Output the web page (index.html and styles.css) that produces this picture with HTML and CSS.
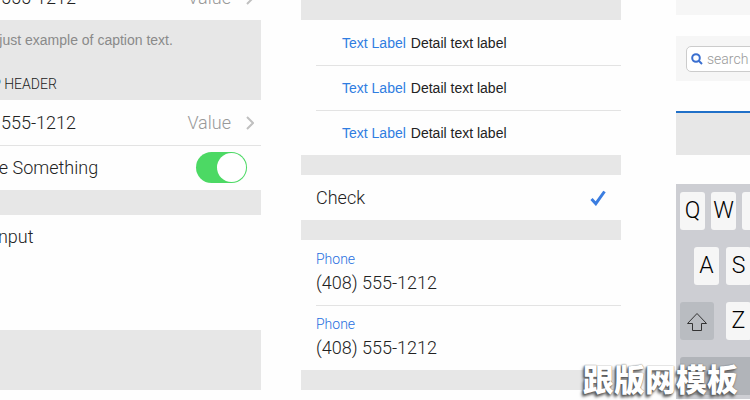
FILE: index.html
```html
<!DOCTYPE html>
<html lang="en">
<head>
  <meta charset="UTF-8">
  <meta name="viewport" content="width=device-width, initial-scale=1.0">
  <title>UI Kit</title>
  <link rel="stylesheet" href="styles.css">
</head>
<body>
  <main class="board">
    <!-- Settings list, runs off the left edge -->
    <section class="column column-left">
      <div class="panel">
        <a class="row" href="#">
          <span>(408) 555-1212</span>
          <span class="value">Value</span>
          <svg class="chevron" viewBox="0 0 8 14"><path d="M1 1l6 6-6 6"/></svg>
        </a>
        <div class="group">
          <p class="caption">This is just example of caption text.</p>
          <h2 class="group-header">GROUP HEADER</h2>
        </div>
        <a class="row" href="#">
          <span>(408) 555-1212</span>
          <span class="value">Value</span>
          <svg class="chevron" viewBox="0 0 8 14"><path d="M1 1l6 6-6 6"/></svg>
        </a>
        <label class="row line">
          <span>Enable Something</span>
          <input class="switch" type="checkbox" checked>
        </label>
        <div class="spacer spacer-mid"></div>
        <label class="row row-area">
          <span>Text Input</span>
          <textarea class="area"></textarea>
        </label>
        <div class="spacer spacer-big"></div>
      </div>
    </section>

    <!-- Detail, check and contact cells -->
    <section class="column">
      <div class="spacer"></div>
      <div class="row detail"><span class="blue">Text Label</span><span>Detail text label</span></div>
      <div class="row detail line"><span class="blue">Text Label</span><span>Detail text label</span></div>
      <div class="row detail line"><span class="blue">Text Label</span><span>Detail text label</span></div>
      <div class="spacer"></div>
      <label class="row">
        <span>Check</span>
        <span class="check">
          <input type="checkbox" checked>
          <svg viewBox="0 0 16 16"><path d="M1.500 9l4.300 4.700L14.500 1.500"/></svg>
        </span>
      </label>
      <div class="spacer"></div>
      <div class="row contact">
        <span class="contact-label">Phone</span>
        <span>(408) 555-1212</span>
      </div>
      <div class="row contact line">
        <span class="contact-label">Phone</span>
        <span>(408) 555-1212</span>
      </div>
      <div class="spacer"></div>
    </section>

    <!-- Bars and keyboard, runs off the right edge -->
    <section class="column column-right">
      <div class="bar"></div>
      <form class="search-bar">
        <label class="search">
          <svg viewBox="0 0 12 12"><circle cx="5" cy="5" r="3.800"/><path d="M8 8l3 3"/></svg>
          <input type="search" placeholder="search" aria-label="search">
        </label>
      </form>
      <div class="progress"></div>
      <div class="keyboard">
        <div class="keys">
          <button class="key">Q</button>
          <button class="key">W</button>
          <button class="key" aria-label="next key"></button>
        </div>
        <div class="keys keys-middle">
          <button class="key">A</button>
          <button class="key">S</button>
        </div>
        <div class="keys keys-bottom">
          <button class="key shift" aria-label="shift">
            <svg viewBox="0 0 22 20"><path d="M11 1.500L1.500 11.500H6.500V18.500H15.500V11.500H20.500Z"/></svg>
          </button>
          <button class="key">Z</button>
        </div>
        <div class="keys">
          <button class="key wide" aria-label="numbers"></button>
        </div>
      </div>
    </section>
  </main>
  <div class="watermark" lang="zh">跟版网模板</div>
</body>
</html>
```
FILE: styles.css
```css
* {
  box-sizing: border-box;
}
body {
  margin: 0;
  background-color: #fefefe;
  color: #222;
  font-family: Roboto, "Liberation Sans", sans-serif;
  font-size: 18px;
  font-weight: 300;
  line-height: 22px;
  overflow: hidden;
}
.board {
  display: grid;
  grid-template-columns: 301fr 375fr 74fr;
}
.column {
  min-width: 0;
  padding-right: 55px;
}
.column-left {
  overflow: hidden;
  padding-right: 40px;
}
.column-right {
  overflow: hidden;
  padding-right: 0;
}
/* the left panel is scrolled up and out to the left */
.panel {
  margin: -25px 0 0 -60px;
}
.row {
  position: relative;
  display: flex;
  align-items: center;
  height: 45px;
  padding: 0 15px;
  color: inherit;
  text-decoration: none;
  white-space: nowrap;
}
.line::before {
  content: "";
  position: absolute;
  top: 0;
  left: 15px;
  right: 0;
  height: 1px;
  background-color: #e3e3e3;
}
.value {
  margin-left: auto;
  color: #999;
}
.chevron {
  width: 8px;
  height: 14px;
  margin: 0 -8px 0 15px;
  fill: none;
  stroke: #c0c0c0;
  stroke-width: 2;
}
.group {
  height: 80px;
  padding: 9px 15px;
  background-color: #e7e7e7;
}
.caption {
  margin: 0;
  color: #8a8a8a;
  font-family: "Liberation Sans", Arial, sans-serif;
  font-size: 14px;
  font-weight: normal;
}
.group-header {
  margin: 22px 0 0;
  font-size: 14px;
  font-weight: 300;
}
.spacer {
  height: 20px;
  background-color: #e7e7e7;
}
.spacer-mid {
  height: 25px;
}
.spacer-big {
  height: 60px;
}
.switch {
  appearance: none;
  display: flex;
  justify-content: flex-end;
  width: 51px;
  height: 31px;
  margin: 0 -1px 0 auto;
  padding: 1px;
  border-radius: 16px;
  background-color: #4cd964;
}
.switch::after {
  content: "";
  width: 29px;
  height: 29px;
  border-radius: 50%;
  background-color: #fff;
}
.row-area {
  align-items: flex-start;
  height: 115px;
  padding-top: 11px;
}
.area {
  flex: 1;
  min-width: 0;
  height: 90px;
  margin-left: 15px;
  border: 0;
  background: none;
  resize: none;
}
.blue {
  color: #2f7de1;
}
.detail {
  gap: 5px;
  padding-left: 41px;
  font-family: "Liberation Sans", Arial, sans-serif;
  font-size: 14px;
  font-weight: normal;
}
.check {
  display: grid;
  width: 16px;
  height: 16px;
  margin-left: auto;
}
.check input,
.check svg {
  grid-area: 1 / 1;
  width: 16px;
  height: 16px;
  margin: 0;
}
.check input {
  opacity: 0;
}
.check svg {
  fill: none;
  stroke: #3b7de0;
  stroke-width: 3;
}
.contact {
  flex-direction: column;
  align-items: flex-start;
  height: 65px;
  padding-top: 8px;
  gap: 2px;
}
.contact-label {
  color: #1f6fe0;
  font-size: 14px;
}
.bar {
  height: 15px;
  background-color: #f6f6f6;
}
.search-bar {
  height: 45px;
  margin: 21px 0 30px;
  padding: 10px 0 0 10px;
  background-color: #f6f6f6;
}
.search {
  display: flex;
  align-items: center;
  gap: 4px;
  height: 26px;
  margin-right: -40px;
  padding-left: 4px;
  border: 1px solid #ccc;
  border-radius: 5px;
  background-color: #fff;
}
.search svg {
  flex: none;
  width: 12px;
  height: 12px;
  fill: none;
  stroke: #3a6fd0;
  stroke-width: 2;
}
.search input {
  flex: 1;
  min-width: 0;
  padding: 0;
  border: 0;
  outline: 0;
  background: none;
  font: inherit;
  font-size: 14px;
}
.search input::placeholder {
  color: #999;
}
.progress {
  height: 44px;
  border-top: 2px solid #2070c8;
  background-color: #e7e7e7;
}
.keyboard {
  display: flex;
  flex-direction: column;
  gap: 17px;
  margin-top: 29px;
  padding: 8px 0 4px 4px;
  background-color: #cdced3;
}
.keys {
  display: flex;
  gap: 6px;
}
.keys-middle {
  gap: 7px;
  padding-left: 14px;
}
.keys-bottom {
  gap: 12px;
}
.key {
  flex: none;
  width: 25px;
  height: 38px;
  padding: 0;
  border: 0;
  border-radius: 3px;
  background-color: #f6f6f6;
  color: #000;
  font: inherit;
  font-size: 23px;
}
.shift {
  width: 34px;
  background-color: #b9bcc1;
}
.shift svg {
  width: 22px;
  height: 20px;
  fill: none;
  stroke: #333;
  vertical-align: middle;
}
.wide {
  width: 100%;
  border-radius: 3px 0 0 3px;
  background-color: #b1b4b9;
}
.watermark {
  position: absolute;
  right: 12px;
  bottom: 5px;
  color: #fff;
  font-family: "Noto Sans CJK SC", sans-serif;
  font-size: 31px;
  font-weight: 900;
  line-height: 34px;
  text-shadow: 0 0 1px #555, -1px 1px 2px #555, -2px 3px 3px #777;
}
```
